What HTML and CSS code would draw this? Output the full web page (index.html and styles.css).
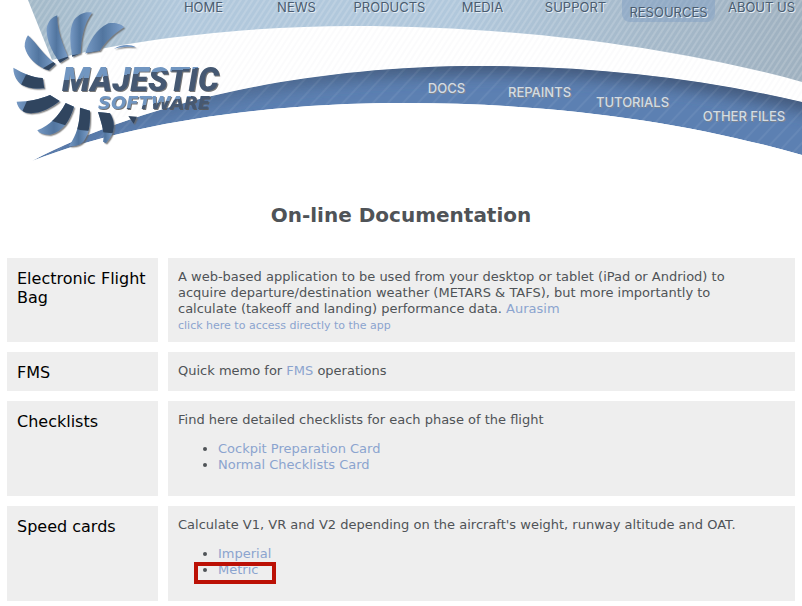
FILE: index.html
```html
<!DOCTYPE html>
<html lang="en">
<head>
  <meta charset="UTF-8">
  <meta name="viewport" content="width=device-width, initial-scale=1.0">
  <title>Majestic Software - On-line Documentation</title>
  <link rel="stylesheet" href="styles.css">
</head>
<body>

  <header class="header">
    <!-- Curved bands -->
    <svg class="header-bg" viewBox="0 0 802 165" preserveAspectRatio="none" aria-hidden="true">
      <defs>
        <linearGradient id="sky" x1="0" x2="1" y1="0" y2="0">
          <stop offset="0" stop-color="#a3b9c8"/>
          <stop offset="0.2" stop-color="#b1c8dc"/>
          <stop offset="0.55" stop-color="#b1c8dc"/>
          <stop offset="0.8" stop-color="#a5b9ca"/>
          <stop offset="1" stop-color="#9fb1c0"/>
        </linearGradient>
        <linearGradient id="bandShade" gradientUnits="userSpaceOnUse" x1="100" x2="450" y1="0" y2="0">
          <stop offset="0" stop-color="#42597a" stop-opacity="0.2"/>
          <stop offset="1" stop-color="#42597a"/>
        </linearGradient>
        <pattern id="lightLines" width="5" height="5" patternUnits="userSpaceOnUse" patternTransform="rotate(33)">
          <path d="M2 0V5" stroke="#fff" stroke-opacity="0.3"/>
        </pattern>
        <pattern id="greyLines" width="5" height="5" patternUnits="userSpaceOnUse" patternTransform="rotate(33)">
          <path d="M2 0V5" stroke="#8899aa" stroke-opacity="0.08"/>
        </pattern>
        <pattern id="darkLines" width="11" height="11" patternUnits="userSpaceOnUse" patternTransform="rotate(43)">
          <path d="M2 0V11" stroke="#fff" stroke-opacity="0.12"/>
        </pattern>
        <filter id="soft" x="-5%" y="-30%" width="110%" height="160%"><feGaussianBlur stdDeviation="8"/></filter>
        <path id="band" d="M32 161C125 112 280 66 480 66C590 66 700 78 802 102V155C690 123 560 103 403 103C270 103 130 122 32 161Z"/>
        <clipPath id="bandClip"><use href="#band"/></clipPath>
      </defs>
      <path d="M100 52C180 35 260 27 353 26C520 26 680 48 802 82V102C700 78 590 66 480 66C400 66 310 75 220 95L110 120Z" fill="url(#greyLines)"/>
      <path d="M28 0H802V82C680 48 520 26 353 26C250 26 130 39 52 60Z" fill="url(#sky)"/>
      <path d="M28 0H802V82C680 48 520 26 353 26C250 26 130 39 52 60Z" fill="url(#lightLines)"/>
      <g clip-path="url(#bandClip)">
        <use href="#band" fill="#5c80b2"/>
        <path d="M32 155C125 106 280 60 480 60C590 60 700 72 822 101" fill="none" stroke="url(#bandShade)" stroke-width="28" filter="url(#soft)"/>
        <use href="#band" fill="url(#darkLines)"/>
      </g>
    </svg>

    <a class="logo" href="#" aria-label="Majestic Software">
      <svg width="240" height="165" viewBox="0 0 240 165">
        <defs>
          <linearGradient id="blade" x1="0" x2="1" y1="0" y2="0">
            <stop offset="0" stop-color="#7699c4"/>
            <stop offset="0.45" stop-color="#51759f"/>
            <stop offset="1" stop-color="#7da0cb"/>
          </linearGradient>
          <linearGradient id="nameFill" gradientUnits="userSpaceOnUse" x1="139" y1="58" x2="142" y2="92">
            <stop offset="0.45" stop-color="#7196c1"/>
            <stop offset="0.45" stop-color="#445872"/>
          </linearGradient>
          <linearGradient id="softFill" gradientUnits="userSpaceOnUse" x1="155" y1="95" x2="158" y2="111">
            <stop offset="0.5" stop-color="#7196c1"/>
            <stop offset="0.5" stop-color="#445872"/>
          </linearGradient>
          <filter id="shade" x="-10%" y="-10%" width="120%" height="125%">
            <feDropShadow dx="1" dy="1" stdDeviation="0.5" flood-color="#555" flood-opacity="0.8"/>
          </filter>
          <filter id="bladeShade">
            <feDropShadow dx="4" dy="4" stdDeviation="1" flood-color="#666" flood-opacity="0.75"/>
          </filter>
          <clipPath id="bladeShapes">
            <path d="M40 203C70 220 95 232 128 234L133 265C100 267 70 262 55 245C44 232 40 218 40 203Z"/>
            <path d="M84 106C110 130 130 165 167 192L146 211C110 200 80 170 74 140C74 125 78 115 84 106Z"/>
            <path d="M172 46C170 90 187 130 205 173L180 188C150 150 138 110 140 85C145 62 158 50 172 46Z"/>
            <path d="M276 38C252 70 244 110 242 160L217 170C210 130 206 90 222 60C240 38 260 34 276 38Z"/>
            <path d="M372 82C342 102 320 120 300 152L256 160C268 125 288 88 325 70C345 66 365 72 372 82Z"/>
            <path d="M50 305C85 305 120 298 150 285L179 303C155 325 110 345 80 338C60 332 52 318 50 305Z"/>
            <path d="M197 309L222 320C210 360 190 395 150 404C130 405 115 398 112 391C150 375 175 350 197 309Z"/>
            <path d="M240 323L270 332C270 365 272 395 250 425C235 440 215 440 207 437C230 405 240 370 240 323Z"/>
            <path d="M294 336L330 340C345 365 350 395 318 430L309 425C315 400 305 370 294 336Z"/>
          </clipPath>
        </defs>
        <!-- Turbine blades -->
        <svg width="240" height="170" viewBox="0 0 720 510">
          <g filter="url(#bladeShade)">
            <path fill="url(#blade)" d="M40 203C70 220 95 232 128 234L133 265C100 267 70 262 55 245C44 232 40 218 40 203Z"/>
            <path fill="url(#blade)" d="M84 106C110 130 130 165 167 192L146 211C110 200 80 170 74 140C74 125 78 115 84 106Z"/>
            <path fill="url(#blade)" d="M172 46C170 90 187 130 205 173L180 188C150 150 138 110 140 85C145 62 158 50 172 46Z"/>
            <path fill="url(#blade)" d="M276 38C252 70 244 110 242 160L217 170C210 130 206 90 222 60C240 38 260 34 276 38Z"/>
            <path fill="url(#blade)" d="M372 82C342 102 320 120 300 152L256 160C268 125 288 88 325 70C345 66 365 72 372 82Z"/>
            <path fill="#6d92c0" d="M342 146C360 134 390 130 408 142C390 139 370 140 342 146Z"/>
            <path fill="url(#blade)" d="M50 305C85 305 120 298 150 285L179 303C155 325 110 345 80 338C60 332 52 318 50 305Z"/>
            <path fill="url(#blade)" d="M197 309L222 320C210 360 190 395 150 404C130 405 115 398 112 391C150 375 175 350 197 309Z"/>
            <path fill="url(#blade)" d="M240 323L270 332C270 365 272 395 250 425C235 440 215 440 207 437C230 405 240 370 240 323Z"/>
            <path fill="url(#blade)" d="M294 336L330 340C345 365 350 395 318 430L309 425C315 400 305 370 294 336Z"/>
            <path fill="#30455f" d="M385 348L411 350L401 371Z"/>
          </g>
          <path clip-path="url(#bladeShapes)" fill="#30455f" d="M60 260L78 224L125 207L165 183L215 166L300 152V250L360 330V402L240 390L140 358L66 336L82 300Z"/>
        </svg>
        <text class="logo-name" x="62" y="91" fill="url(#nameFill)" filter="url(#shade)">MAJESTIC</text>
        <text class="logo-sub" x="98" y="109" fill="url(#softFill)" filter="url(#shade)">SOFTWARE</text>
      </svg>
    </a>

    <nav class="main-nav">
      <a href="#">HOME</a>
      <a href="#">NEWS</a>
      <a href="#">PRODUCTS</a>
      <a href="#">MEDIA</a>
      <a href="#">SUPPORT</a>
      <a href="#" class="active">RESOURCES</a>
      <a href="#">ABOUT US</a>
    </nav>

    <nav class="sub-nav">
      <a href="#">DOCS</a>
      <a href="#">REPAINTS</a>
      <a href="#">TUTORIALS</a>
      <a href="#" class="wide">OTHER FILES</a>
    </nav>
  </header>

  <main class="content">
    <h1>On-line Documentation</h1>

    <table class="docs">
      <tr>
        <th scope="row">Electronic Flight Bag</th>
        <td>
          A web-based application to be used from your desktop or tablet (iPad or Andriod) to acquire departure/destination weather (METARS &amp; TAFS), but more importantly to calculate (takeoff and landing) performance data. <a href="#">Aurasim</a><br>
          <a href="#" class="small">click here to access directly to the app</a>
        </td>
      </tr>
      <tr>
        <th scope="row">FMS</th>
        <td>Quick memo for <a href="#">FMS</a> operations</td>
      </tr>
      <tr>
        <th scope="row">Checklists</th>
        <td>
          Find here detailed checklists for each phase of the flight
          <ul>
            <li><a href="#">Cockpit Preparation Card</a></li>
            <li><a href="#">Normal Checklists Card</a></li>
          </ul>
        </td>
      </tr>
      <tr>
        <th scope="row">Speed cards</th>
        <td>
          Calculate V1, VR and V2 depending on the aircraft's weight, runway altitude and OAT.
          <ul>
            <li><a href="#">Imperial</a></li>
            <li class="marked"><a href="#">Metric</a></li>
          </ul>
        </td>
      </tr>
    </table>
  </main>

</body>
</html>
```

FILE: styles.css
```css
/* General */
body {
  margin: 0;
  background-color: #fff;
  color: #4f5357;
  font-family: Verdana, "DejaVu Sans", sans-serif;
  font-size: 13px;
  line-height: 16px;
  overflow-x: hidden;
}

a {
  color: #8ba4cf;
  text-decoration: none;
}

/* Header */
.header {
  position: relative;
  height: 165px;
  overflow: hidden;
}

.header-bg {
  position: absolute;
  top: 0;
  left: 0;
  width: 100%;
  height: 165px;
}

.logo {
  position: absolute;
  top: 0;
  left: 0;
}

.logo-name {
  font: italic 900 33px Roboto, sans-serif;
}

.logo-sub {
  font: italic bold 18px "DejaVu Sans", sans-serif;
}

/* Navigation */
.main-nav,
.sub-nav {
  position: relative;
  display: flex;
  align-items: flex-start;
  font-family: Inter, sans-serif;
  font-size: 13px;
}

.main-nav a,
.sub-nav a {
  flex: 0 0 93px;
  text-align: center;
  white-space: nowrap;
}

.main-nav {
  height: 80px;
  padding-left: 157px;
  line-height: 14px;
}

.main-nav a {
  color: #4a5c70;
  text-shadow: 1px 1px 0 #e4ecf3;
}

.main-nav .active {
  padding: 5px 0 3px;
  background-color: rgba(130, 160, 195, 0.5);
  border-radius: 0 0 8px 8px;
}

.sub-nav {
  padding-left: 400px;
  font-weight: 500;
}

.sub-nav a {
  color: #d3dce4;
  text-shadow: 1px 1px 0 #7d8590;
}

/* The links follow the curve of the band */
.sub-nav a:nth-child(2) {
  margin-top: 4px;
}

.sub-nav a:nth-child(3) {
  margin-top: 14px;
}

.sub-nav a:nth-child(4) {
  margin-top: 28px;
}

.sub-nav .wide {
  flex-basis: 130px;
}

/* Content */
h1 {
  margin: 38px 0 21px;
  font-size: 20px;
  line-height: 24px;
  text-align: center;
}

.docs {
  width: calc(100% + 6px);
  margin: 0 -3px;
  border-spacing: 10px;
}

.docs th,
.docs td {
  padding: 11px 10px 9px;
  background-color: #eee;
  text-align: left;
  vertical-align: top;
}

.docs td {
  padding-right: 35px;
}

.docs th {
  width: 131px;
  color: #000;
  font-size: 16px;
  font-weight: normal;
  line-height: 19px;
}

.docs ul {
  margin: 13px 0 14px;
  padding-left: 40px;
}

.small {
  font-size: 11px;
  line-height: 14px;
}

/* Highlight box */
.marked {
  position: relative;
}

.marked::after {
  content: "";
  position: absolute;
  top: 0;
  left: -24px;
  width: 74px;
  height: 14px;
  border: 4px solid #bb1005;
}
```
